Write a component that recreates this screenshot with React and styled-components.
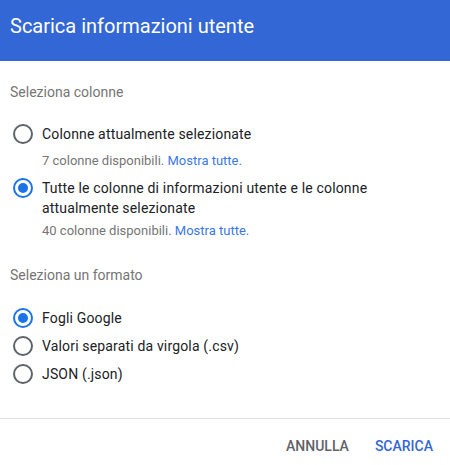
import styled, { createGlobalStyle } from "styled-components";

const GlobalStyle = createGlobalStyle`
    html, body {
        margin: 0;
        padding: 0;
        background: #ffffff;
        font-family: Roboto, "Liberation Sans", Arial, sans-serif;
    }
`;

const columnOptions = [
    { label: "Colonne attualmente selezionate", count: 7, checked: false },
    {
        label: "Tutte le colonne di informazioni utente e le colonne attualmente selezionate",
        count: 40,
        checked: true,
    },
];

const formatOptions = [
    { label: "Fogli Google", checked: true },
    { label: "Valori separati da virgola (.csv)", checked: false },
    { label: "JSON (.json)", checked: false },
];

export default function App() {
    return (
        <Dialog>
            <GlobalStyle />
            <Header>
                <Title>Scarica informazioni utente</Title>
            </Header>
            <Body>
                <SectionLabel $top={21}>Seleziona colonne</SectionLabel>
                {columnOptions.map((opt, i) => (
                    <div key={opt.label}>
                        <Option $top={i === 0 ? 22 : 9}>
                            <Radio $checked={opt.checked} />
                            <Label>{opt.label}</Label>
                        </Option>
                        <Hint $top={i === 0 ? 9 : 5}>
                            {opt.count} colonne disponibili. <Link href="#">Mostra tutte.</Link>
                        </Hint>
                    </div>
                ))}
                <SectionLabel $top={26}>Seleziona un formato</SectionLabel>
                {formatOptions.map((opt, i) => (
                    <Option key={opt.label} $top={i === 0 ? 23 : 8}>
                        <Radio $checked={opt.checked} />
                        <Label>{opt.label}</Label>
                    </Option>
                ))}
            </Body>
            <Footer>
                <TextButton>Annulla</TextButton>
                <TextButton $primary>Scarica</TextButton>
            </Footer>
        </Dialog>
    );
}

const Dialog = styled.div`
    width: 450px;
    height: 465px;
    display: flex;
    flex-direction: column;
    background: #fff;
`;

const Header = styled.div`
    height: 61px;
    box-sizing: border-box;
    padding: 14px 10px 0;
    background-color: #3367d6;
`;

const Title = styled.h1`
    margin: 0;
    font-size: 20px;
    line-height: 24px;
    font-weight: 400;
    color: #ffffff;
`;

const Body = styled.div`
    display: flex;
    flex-direction: column;
    padding: 0 24px 34px 0;
    border-bottom: 1px solid #e0e0e0;
`;

const SectionLabel = styled.div`
    margin-top: ${(p) => p.$top}px;
    padding-left: 10px;
    font-size: 14px;
    line-height: 20px;
    color: #757575;
`;

const Option = styled.label`
    display: flex;
    align-items: flex-start;
    gap: 9px;
    margin-top: ${(p) => p.$top}px;
    padding-left: 13px;
    cursor: pointer;
`;

const Radio = styled.span`
    flex: none;
    width: 20px;
    height: 20px;
    box-sizing: border-box;
    border-radius: 50%;
    border: 2px solid ${(p) => (p.$checked ? "#1a73e8" : "#5f6368")};
    position: relative;
    &::after {
        content: "";
        display: ${(p) => (p.$checked ? "block" : "none")};
        position: absolute;
        left: 3px;
        top: 3px;
        width: 10px;
        height: 10px;
        border-radius: 50%;
        background: #1a73e8;
    }
`;

const Label = styled.span`
    font-size: 14px;
    line-height: 20px;
    letter-spacing: 0.16px;
    color: #202124;
`;

const Hint = styled.div`
    margin-top: ${(p) => p.$top}px;
    padding-left: 42px;
    font-size: 13px;
    line-height: 16px;
    color: #757575;
`;

const Link = styled.a`
    color: #3b78e7;
    text-decoration: none;
`;

const Footer = styled.div`
    display: flex;
    justify-content: flex-end;
    gap: 10px;
    padding: 17px 9px 0 0;
`;

const TextButton = styled.button`
    border: none;
    background: none;
    padding: 0 8px;
    font-family: inherit;
    font-size: 14px;
    line-height: 20px;
    font-weight: 500;
    text-transform: uppercase;
    color: ${(p) => (p.$primary ? "#3367d6" : "#5f6368")};
    cursor: pointer;
`;
